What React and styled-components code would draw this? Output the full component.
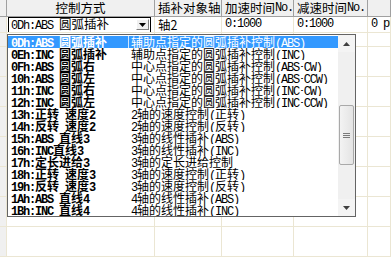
import styled, { createGlobalStyle } from 'styled-components';

const GlobalStyle = createGlobalStyle`
    html, body {
        margin: 0;
        padding: 0;
        background: #fff;
        overflow: hidden;
    }
    body {
        font-family: 'Noto Sans CJK SC', 'Liberation Mono', sans-serif;
        font-size: 12px;
        color: #000;
    }
`;

const COLS = '7px 148px 67px 72px 74px 1fr';

const Page = styled.div`
    position: relative;
    width: 391px;
    height: 263px;
    overflow: hidden;
`;

const HeaderRow = styled.div`
    display: grid;
    grid-template-columns: ${COLS};
    height: 17px;
    background: #f0f0f0;
    border-bottom: 1px solid #a0a0a0;
    box-sizing: border-box;
`;

const HeadCell = styled.div`
    display: flex;
    align-items: center;
    justify-content: ${(p) => (p.$center ? 'center' : 'flex-start')};
    padding-left: ${(p) => (p.$center ? '0' : '3px')};
    border-right: 1px solid #a0a0a0;
    font-size: 12.5px;
    line-height: 16px;
    white-space: nowrap;
    overflow: hidden;
`;

const Row = styled.div`
    display: grid;
    grid-template-columns: ${COLS};
    height: ${(p) => p.$h}px;
`;

const Cell = styled.div`
    display: flex;
    align-items: center;
    padding-left: 3px;
    border-right: 1px solid #ebe6d3;
    border-bottom: 1px solid #ebe6d3;
    background: ${(p) => (p.$gray ? '#f0f0f0' : '#fff')};
    white-space: nowrap;
    overflow: hidden;
    box-sizing: border-box;
    font-size: 12.5px;
    line-height: 15px;
`;

const ComboCell = styled(Cell)`
    padding: 0 3px 0 1px;
`;

const Combo = styled.div`
    flex: 1;
    height: 16px;
    display: flex;
    align-items: center;
    justify-content: space-between;
    border: 1px solid #000;
    box-sizing: border-box;
    padding: 0 1px 0 2px;
    font-size: 12.5px;
    line-height: 14px;
`;

const ComboButton = styled.div`
    width: 13px;
    height: 11px;
    box-sizing: border-box;
    background: #f0f0f0;
    border: 1px solid;
    border-color: #fff #808080 #808080 #fff;
    display: flex;
    align-items: center;
    justify-content: center;
`;

const Latin = styled.span`
    font-family: 'Liberation Mono', monospace;
    font-size: 12px;
    letter-spacing: -1.2px;
    line-height: inherit;
`;

const List = styled.div`
    position: absolute;
    left: 7px;
    top: 34px;
    width: 349px;
    height: 183px;
    box-sizing: border-box;
    border: 1px solid #646464;
    background: #fff;
    display: flex;
`;

const Items = styled.div`
    flex: 1;
    display: flex;
    flex-direction: column;
    padding-top: 1px;
`;

const Item = styled.div`
    display: grid;
    grid-template-columns: 120px 1fr;
    height: 12px;
    line-height: 12px;
    background: ${(p) => (p.$sel ? '#3399ff' : 'transparent')};
    color: ${(p) => (p.$sel ? '#fff' : '#000')};
    white-space: nowrap;
    overflow: hidden;
`;

const Code = styled.span`
    padding-left: 3px;
    font-weight: 700;
    line-height: 12px;
`;

const Desc = styled.span`
    padding-left: 2px;
    line-height: 12px;
    border-left: 1px solid ${(p) => (p.$sel ? '#cfe6ff' : 'transparent')};
`;

const Scroll = styled.div`
    width: 17px;
    display: flex;
    flex-direction: column;
    background: #f0f0f0;
`;

const ArrowBtn = styled.div`
    height: 17px;
    display: flex;
    align-items: center;
    justify-content: center;
    background: #f4f4f4;
`;

const TrackGap = styled.div`
    height: ${(p) => p.$h}px;
`;

const Thumb = styled.div`
    height: 60px;
    margin: 0 1px;
    box-sizing: border-box;
    border: 1px solid #a9a9a9;
    border-radius: 2px;
    background: linear-gradient(to right, #f3f3f3, #e4e4e4);
    display: flex;
    flex-direction: column;
    align-items: center;
    justify-content: center;
    gap: 1px;
`;

const Grip = styled.div`
    width: 7px;
    height: 1px;
    background: #7a7a7a;
`;

const TrackRest = styled.div`
    flex: 1;
`;

const mixed = (t) =>
    t
        .split(/([\x20-\x7e\uff65]+)/)
        .filter(Boolean)
        .map((s, i) =>
            /^[\x20-\x7e\uff65]+$/.test(s) ? <Latin key={i}>{s}</Latin> : <span key={i}>{s}</span>
        );

const items = [
    ['0Dh:ABS 圆弧插补', '辅助点指定的圆弧插补控制(ABS)'],
    ['0Eh:INC 圆弧插补', '辅助点指定的圆弧插补控制(INC)'],
    ['0Fh:ABS 圆弧右', '中心点指定的圆弧插补控制(ABS･CW)'],
    ['10h:ABS 圆弧左', '中心点指定的圆弧插补控制(ABS･CCW)'],
    ['11h:INC 圆弧右', '中心点指定的圆弧插补控制(INC･CW)'],
    ['12h:INC 圆弧左', '中心点指定的圆弧插补控制(INC･CCW)'],
    ['13h:正转 速度2', '2轴的速度控制(正转)'],
    ['14h:反转 速度2', '2轴的速度控制(反转)'],
    ['15h:ABS 直线3', '3轴的线性插补(ABS)'],
    ['16h:INC直线3', '3轴的线性插补(INC)'],
    ['17h:定长进给3', '3轴的定长进给控制'],
    ['18h:正转 速度3', '3轴的速度控制(正转)'],
    ['19h:反转 速度3', '3轴的速度控制(反转)'],
    ['1Ah:ABS 直线4', '4轴的线性插补(ABS)'],
    ['1Bh:INC 直线4', '4轴的线性插补(INC)'],
];

const bodyRows = [14, 30, 30, 30, 30, 30, 30, 30];

const Tri = ({ up, color = '#000' }) => (
    <svg width="7" height="4" viewBox="0 0 7 4">
        <path d={up ? 'M0 4 L3.5 0 L7 4 Z' : 'M0 0 L7 0 L3.5 4 Z'} fill={color} />
    </svg>
);

const App = () => (
    <>
        <GlobalStyle />
        <Page>
            <HeaderRow>
                <HeadCell />
                <HeadCell $center>控制方式</HeadCell>
                <HeadCell>插补对象轴</HeadCell>
                <HeadCell>加速时间<Latin>No.</Latin></HeadCell>
                <HeadCell>减速时间<Latin>No.</Latin></HeadCell>
                <HeadCell />
            </HeaderRow>
            <Row $h={16}>
                <Cell $gray />
                <ComboCell>
                    <Combo>
                        <span>{mixed('0Dh:ABS 圆弧插补')}</span>
                        <ComboButton>
                            <Tri />
                        </ComboButton>
                    </Combo>
                </ComboCell>
                <Cell>轴2</Cell>
                <Cell>{mixed('0:1000')}</Cell>
                <Cell>{mixed('0:1000')}</Cell>
                <Cell>{mixed('0 pulse')}</Cell>
            </Row>
            {bodyRows.map((h, i) => (
                <Row key={i} $h={h}>
                    <Cell $gray />
                    <Cell />
                    <Cell />
                    <Cell />
                    <Cell />
                    <Cell />
                </Row>
            ))}
            <List>
                <Items>
                    {items.map(([code, desc], i) => (
                        <Item key={code} $sel={i === 0}>
                            <Code>{mixed(code)}</Code>
                            <Desc $sel={i === 0}>{mixed(desc)}</Desc>
                        </Item>
                    ))}
                </Items>
                <Scroll>
                    <ArrowBtn>
                        <Tri up color="#404040" />
                    </ArrowBtn>
                    <TrackGap $h={53} />
                    <Thumb>
                        <Grip />
                        <Grip />
                        <Grip />
                    </Thumb>
                    <TrackRest />
                    <ArrowBtn>
                        <Tri color="#404040" />
                    </ArrowBtn>
                </Scroll>
            </List>
        </Page>
    </>
);

export default App;
